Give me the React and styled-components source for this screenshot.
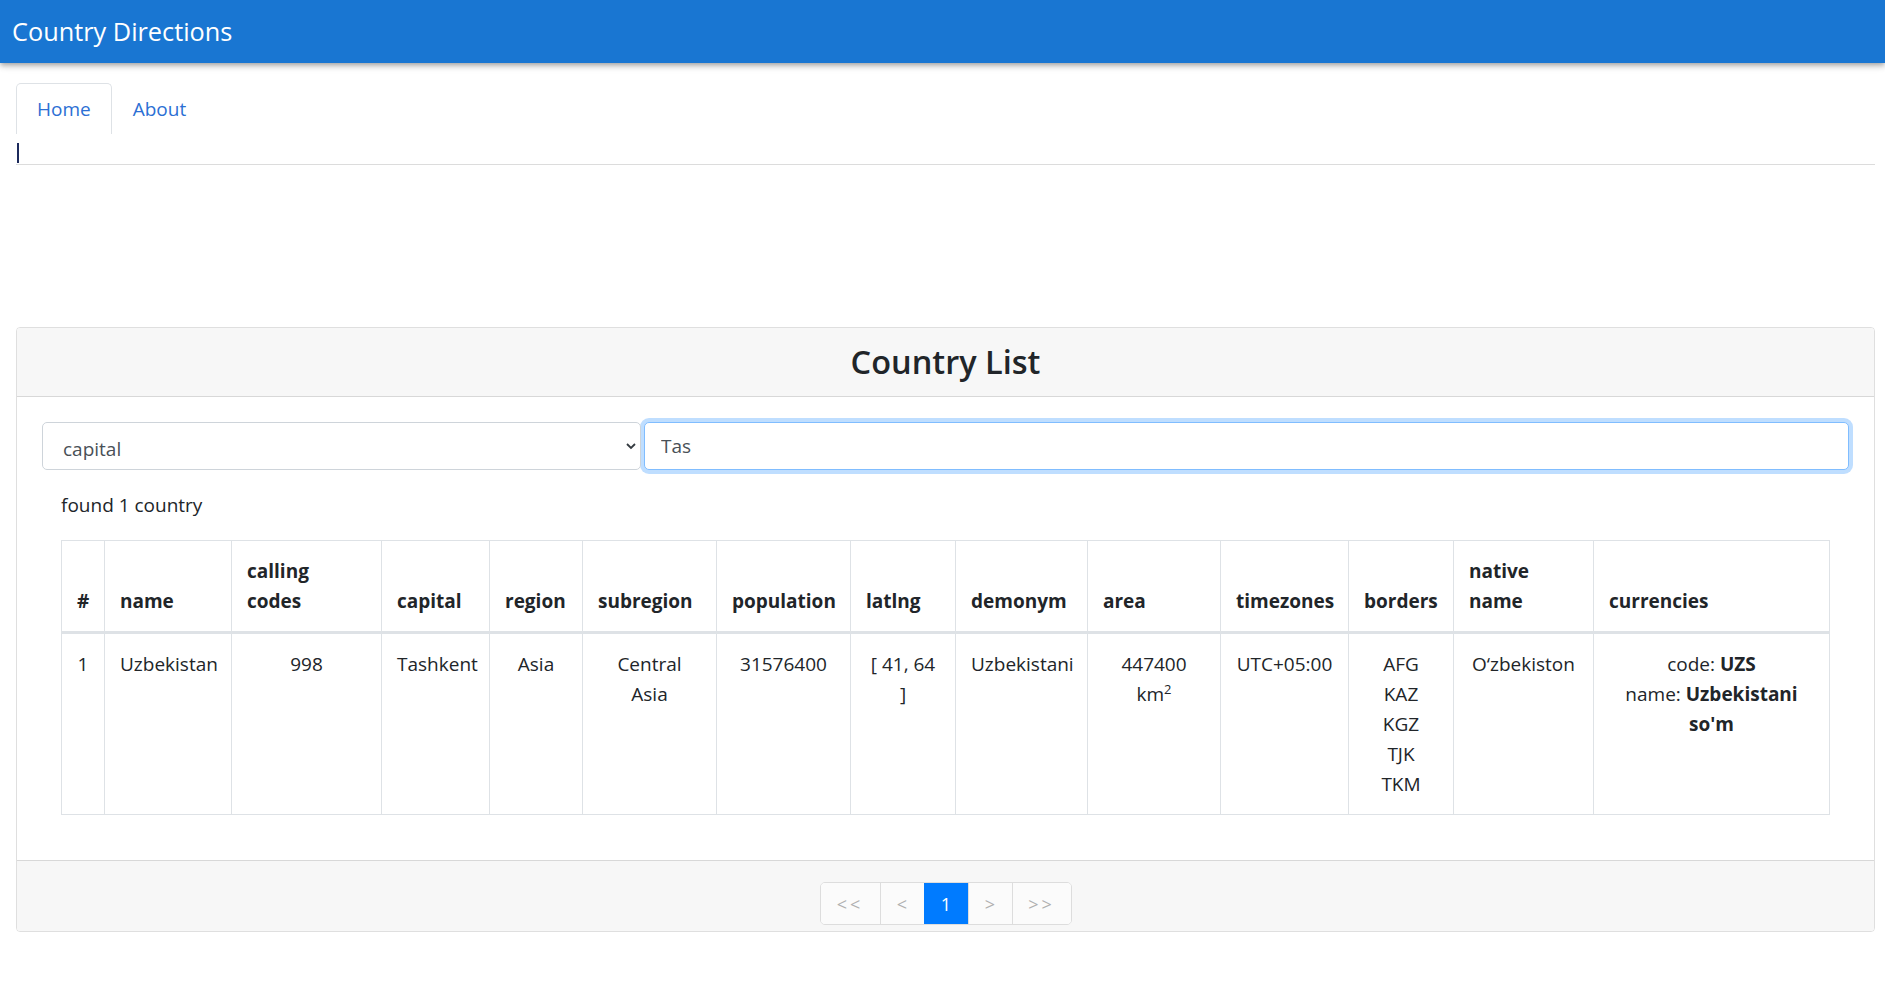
import styled, { createGlobalStyle } from "styled-components";

const GlobalStyle = createGlobalStyle`
  body {
    margin: 0;
    font-family: "Open Sans", "Noto Sans", sans-serif;
    font-size: 19px;
    line-height: 30px;
    color: #212529;
    background: #fff;
  }
  * {
    box-sizing: border-box;
  }
`;

// column widths measured from the original auto-sized table
const columns = [
  { key: "num", label: "#", width: 43 },
  { key: "name", label: "name", width: 127 },
  { key: "callingCodes", label: "calling\ncodes", width: 150 },
  { key: "capital", label: "capital", width: 108 },
  { key: "region", label: "region", width: 93 },
  { key: "subregion", label: "subregion", width: 134 },
  { key: "population", label: "population", width: 134 },
  { key: "latlng", label: "latlng", width: 105 },
  { key: "demonym", label: "demonym", width: 132 },
  { key: "area", label: "area", width: 133 },
  { key: "timezones", label: "timezones", width: 128 },
  { key: "borders", label: "borders", width: 105 },
  { key: "nativeName", label: "native\nname", width: 140 },
  { key: "currencies", label: "currencies", width: 236 },
];

const country = {
  name: "Uzbekistan",
  callingCodes: "998",
  capital: "Tashkent",
  region: "Asia",
  subregion: "Central Asia",
  population: 31576400,
  latlng: [41, 64],
  demonym: "Uzbekistani",
  area: 447400,
  timezones: ["UTC+05:00"],
  borders: ["AFG", "KAZ", "KGZ", "TJK", "TKM"],
  nativeName: "O‘zbekiston",
  currencies: [{ code: "UZS", name: "Uzbekistani so'm" }],
};

const pages = [
  { label: "<<", wide: true },
  { label: "<" },
  { label: "1", active: true },
  { label: ">" },
  { label: ">>", wide: true },
];

const App = () => {
  return (
    <>
      <GlobalStyle />
      <AppBar>
        <Brand>Country Directions</Brand>
      </AppBar>
      <Main>
        <Tabs>
          <Tab active>Home</Tab>
          <Tab>About</Tab>
        </Tabs>
        <TabContent>
          <Caret />
        </TabContent>

        <Card>
          <CardHeader>
            <CardTitle>Country List</CardTitle>
          </CardHeader>
          <CardBody>
            <SearchRow>
              <SelectWrap>
                <Select defaultValue="capital">
                  <option value="name">name</option>
                  <option value="capital">capital</option>
                  <option value="region">region</option>
                </Select>
                <Chevron viewBox="0 0 12 12">
                  <path d="M2 4 L6 8 L10 4" />
                </Chevron>
              </SelectWrap>
              <SearchInput defaultValue="Tas" />
            </SearchRow>

            <Found>found 1 country</Found>

            <TableWrap>
              <Table>
                <colgroup>
                  {columns.map((c) => (
                    <col key={c.key} style={{ width: c.width }} />
                  ))}
                </colgroup>
                <thead>
                  <tr>
                    {columns.map((c) => (
                      <Th key={c.key}>{c.label}</Th>
                    ))}
                  </tr>
                </thead>
                <tbody>
                  <tr>
                    <Td>1</Td>
                    <Td>{country.name}</Td>
                    <Td>{country.callingCodes}</Td>
                    <Td>{country.capital}</Td>
                    <Td>{country.region}</Td>
                    <Td>{country.subregion}</Td>
                    <Td>{country.population}</Td>
                    <Td>
                      [ {country.latlng.join(", ")}
                      <br />]
                    </Td>
                    <Td>{country.demonym}</Td>
                    <Td>
                      {country.area} km<Sup>2</Sup>
                    </Td>
                    <Td>{country.timezones.join(", ")}</Td>
                    <Td>
                      {country.borders.map((b) => (
                        <div key={b}>{b}</div>
                      ))}
                    </Td>
                    <Td>{country.nativeName}</Td>
                    <Td>
                      {country.currencies.map((cur) => (
                        <div key={cur.code}>
                          code: <b>{cur.code}</b>
                          <br />
                          name: <b>{cur.name}</b>
                        </div>
                      ))}
                    </Td>
                  </tr>
                </tbody>
              </Table>
            </TableWrap>
          </CardBody>
          <CardFooter>
            <Pagination>
              {pages.map((p) => (
                <PageItem key={p.label} active={p.active} wide={p.wide}>
                  {p.label}
                </PageItem>
              ))}
            </Pagination>
          </CardFooter>
        </Card>
      </Main>
    </>
  );
};

const AppBar = styled.header`
  height: 63px;
  display: flex;
  align-items: center;
  padding-left: 12px;
  background: #1976d2;
  box-shadow: 0 2px 4px -1px rgba(0, 0, 0, 0.2), 0 4px 5px 0 rgba(0, 0, 0, 0.14),
    0 1px 10px 0 rgba(0, 0, 0, 0.12);
`;

const Brand = styled.h1`
  margin: 0;
  font-size: 25.3px;
  font-weight: 400;
  color: #fff;
  line-height: 1.6;
`;

const Main = styled.main`
  margin: 0 10px 0 16px;
`;

const Tabs = styled.nav`
  display: flex;
  margin-top: 20px;
`;

const Tab = styled.a`
  display: block;
  padding: 10px 20px;
  line-height: 30px;
  color: #2c6fd4;
  cursor: pointer;
  border: 1px solid ${(p) => (p.active ? "#dee2e6" : "transparent")};
  border-bottom: none;
  border-radius: 5px 5px 0 0;
`;

const TabContent = styled.div`
  height: 31px;
  padding: 9px 0 0 1px;
  border-bottom: 1px solid #dcdcdc;
`;

const Caret = styled.span`
  display: block;
  width: 2px;
  height: 20px;
  background: #1c2a5c;
`;

const Card = styled.section`
  margin-top: 162px;
  border: 1px solid rgba(0, 0, 0, 0.125);
  border-radius: 4px;
  overflow: hidden;
`;

const CardHeader = styled.div`
  padding: 15px 25px;
  background: #f7f7f7;
  border-bottom: 1px solid rgba(0, 0, 0, 0.125);
`;

const CardTitle = styled.h2`
  margin: 0;
  text-align: center;
  font-size: 32.5px;
  font-weight: 600;
  line-height: 38px;
`;

const CardBody = styled.div`
  padding: 25px;
`;

const SearchRow = styled.div`
  display: flex;
  gap: 3px;
`;

const SelectWrap = styled.div`
  position: relative;
  flex: 0 0 599px;
`;

const Select = styled.select`
  width: 100%;
  height: 48px;
  padding: 6px 30px 0 20px;
  font: inherit;
  color: #495057;
  background: #fff;
  border: 1px solid #ced4da;
  border-radius: 5px;
  appearance: none;
  outline: none;
`;

const Chevron = styled.svg`
  position: absolute;
  right: 4px;
  top: 18px;
  width: 12px;
  height: 12px;
  fill: none;
  stroke: #343a40;
  stroke-width: 1.8;
  pointer-events: none;
`;

const SearchInput = styled.input`
  flex: 1;
  height: 48px;
  padding: 0 16px;
  font: inherit;
  color: #495057;
  background: #fff;
  border: 1px solid #80bdff;
  border-radius: 5px;
  outline: none;
  box-shadow: 0 0 0 4px rgba(0, 123, 255, 0.25);
`;

const Found = styled.p`
  margin: 20px 19px;
`;

const TableWrap = styled.div`
  margin: 0 19px 20px;
`;

const Table = styled.table`
  width: 100%;
  table-layout: fixed;
  border-collapse: collapse;
`;

const Th = styled.th`
  padding: 15px;
  text-align: left;
  vertical-align: bottom;
  white-space: pre-line;
  font-weight: 700;
  border: 1px solid #dee2e6;
  border-bottom-width: 3px;
`;

const Td = styled.td`
  padding: 15px;
  text-align: center;
  vertical-align: top;
  border: 1px solid #dee2e6;
`;

const Sup = styled.sup`
  font-size: 13px;
  line-height: 0;
`;

const CardFooter = styled.div`
  display: flex;
  justify-content: center;
  padding: 21px 25px 6px;
  background: #f7f7f7;
  border-top: 1px solid rgba(0, 0, 0, 0.125);
`;

const Pagination = styled.ul`
  display: flex;
  margin: 0;
  padding: 0;
  list-style: none;
  border: 1px solid #dddddd;
  border-radius: 5px;
  overflow: hidden;
`;

const PageItem = styled.li`
  height: 41px;
  width: ${(p) => (p.wide ? "59px" : "44px")};
  display: flex;
  align-items: center;
  justify-content: center;
  font-size: 18px;
  letter-spacing: ${(p) => (p.wide ? "3px" : "0")};
  color: ${(p) => (p.active ? "#fff" : "#b0b0b0")};
  background: ${(p) => (p.active ? "#007bff" : "#fbfbfb")};
  border-left: 1px solid ${(p) => (p.active ? "#007bff" : "#dddddd")};

  &:first-child {
    border-left: none;
  }
`;

export default App;
